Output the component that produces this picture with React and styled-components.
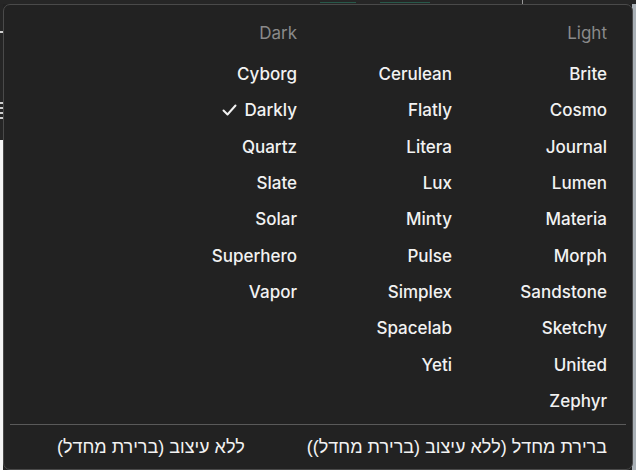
import styled, { createGlobalStyle } from 'styled-components';

const GlobalStyle = createGlobalStyle`
  html, body {
    margin: 0;
    padding: 0;
    background: #242424;
  }
  * { box-sizing: border-box; }
`

const Page = styled.div`
  position: relative;
  width: 636px;
  height: 470px;
  overflow: hidden;
  display: grid;
  grid-template-columns: 3px 1fr 4px;
  grid-template-rows: 4px 1fr;
  background: #242424;
  font-family: Inter, "Liberation Sans", sans-serif;
`

const TopBar = styled.div`
  grid-column: 1 / 4;
  display: flex;
  align-items: flex-end;
  gap: 24px;
  padding-left: 320px;
  background: #262626;
`

const GreenBit = styled.span`
  display: block;
  width: ${p => p.$w}px;
  height: 1px;
  margin-bottom: 1px;
  background: #28594a;
`

const TopDivider = styled.span`
  display: block;
  width: 1px;
  height: 4px;
  margin-left: 68px;
  background: #9a9a9a;
`

const LeftStrip = styled.div`
  display: flex;
  flex-direction: column;
  background: linear-gradient(#252525 0 136px, #f4f4f4 136px);
  padding-top: 27px;
`

const Tick = styled.span`
  display: block;
  height: 2px;
  background: #cfcfcf;
  margin-bottom: ${p => p.$mb}px;
`

const Middle = styled.div`
  background: #222;
`

const RightStrip = styled.div`
  background: #a9b0b6;
`

const Menu = styled.div`
  position: absolute;
  left: 3px;
  top: 4px;
  width: 630px;
  height: 466px;
  background: #222222;
  border: 1px solid #4a4a4a;
  border-radius: 7px;
  direction: rtl;
  padding: 10px 0 0;
`

const Columns = styled.div`
  display: flex;
  padding-right: 25px;
`

const Column = styled.div`
  width: 155px;
  display: flex;
  flex-direction: column;
`

const Heading = styled.div`
  height: 36px;
  margin-bottom: 5px;
  display: flex;
  align-items: center;
  font-size: 17px;
  color: #8a8a8a;
`

const Item = styled.div`
  height: 36.33px;
  display: flex;
  align-items: center;
  gap: 8px;
  font-size: 17px;
  font-weight: 500;
  color: #f2f2f2;
`

const Separator = styled.hr`
  margin: 5px 6px 4px;
  border: 0;
  border-top: 1px solid #5a5a5a;
`

const Footer = styled.div`
  display: flex;
  gap: 62px;
  padding-right: 25px;
`

const FooterItem = styled.div`
  height: 36px;
  display: flex;
  align-items: center;
  font-family: "Liberation Sans", sans-serif;
  font-size: 18px;
  color: #f2f2f2;
`

const Check = () => (
  <svg width="15" height="12" viewBox="0 0 15 12" fill="none">
    <polyline points="1.5,6.5 5.5,10.5 13.5,1.5" stroke="#f2f2f2" strokeWidth="2" strokeLinecap="round" strokeLinejoin="round" />
  </svg>
)

const light = ['Brite', 'Cosmo', 'Journal', 'Lumen', 'Materia', 'Morph', 'Sandstone', 'Sketchy', 'United', 'Zephyr']
const middle = ['Cerulean', 'Flatly', 'Litera', 'Lux', 'Minty', 'Pulse', 'Simplex', 'Spacelab', 'Yeti']
const dark = ['Cyborg', 'Darkly', 'Quartz', 'Slate', 'Solar', 'Superhero', 'Vapor']

function App() {
  return (
    <>
      <GlobalStyle />
      <Page>
        <TopBar>
          <GreenBit $w={36} />
          <GreenBit $w={50} />
          <TopDivider />
        </TopBar>
        <LeftStrip>
          <Tick $mb={69} />
          <Tick $mb={3} />
          <Tick $mb={3} />
          <Tick $mb={3} />
          <Tick $mb={0} />
        </LeftStrip>
        <Middle />
        <RightStrip />

        <Menu>
          <Columns>
            <Column>
              <Heading>Light</Heading>
              {light.map(n => <Item key={n}>{n}</Item>)}
            </Column>
            <Column>
              <Heading>&nbsp;</Heading>
              {middle.map(n => <Item key={n}>{n}</Item>)}
            </Column>
            <Column>
              <Heading>Dark</Heading>
              {dark.map(n => (
                <Item key={n}>
                  {n}
                  {n === 'Darkly' && <Check />}
                </Item>
              ))}
            </Column>
          </Columns>
          <Separator />
          <Footer>
            <FooterItem>ברירת מחדל (ללא עיצוב (ברירת מחדל))</FooterItem>
            <FooterItem>ללא עיצוב (ברירת מחדל)</FooterItem>
          </Footer>
        </Menu>
      </Page>
    </>
  );
}

export default App;
